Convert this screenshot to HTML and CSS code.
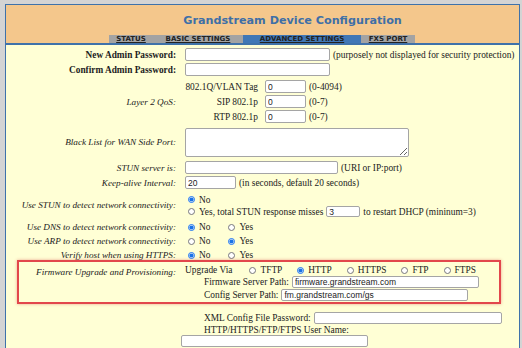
FILE: index.html
```html
<!DOCTYPE html>
<html lang="en">
<head>
  <meta charset="UTF-8" />
  <title>Grandstream Device Configuration</title>
  <link rel="stylesheet" href="styles.css">
</head>
<body>
  <div class="frame">
    <div class="header">
      <div class="title">Grandstream Device Configuration</div>
      <div class="tabs">
        <a class="tab tab-status">STATUS</a>
        <a class="tab tab-basic">BASIC SETTINGS</a>
        <a class="tab tab-adv active">ADVANCED SETTINGS</a>
        <a class="tab tab-fxs">FXS PORT</a>
      </div>
    </div>

    <form class="config">
      <div class="row r15">
        <label class="lbl b">New Admin Password:</label>
        <div class="ctl"><input type="password" class="field w145"><span class="note">(purposely not displayed for security protection)</span></div>
      </div>
      <div class="row r15">
        <label class="lbl b">Confirm Admin Password:</label>
        <div class="ctl"><input type="password" class="field w145"></div>
      </div>

      <div class="row qos">
        <label class="lbl i">Layer 2 QoS:</label>
        <div class="qos-grid">
          <span class="qlbl">802.1Q/VLAN Tag</span><input type="text" class="field w41" value="0"><span class="note">(0-4094)</span>
          <span class="qlbl">SIP 802.1p</span><input type="text" class="field w41" value="0"><span class="note">(0-7)</span>
          <span class="qlbl">RTP 802.1p</span><input type="text" class="field w41" value="0"><span class="note">(0-7)</span>
        </div>
      </div>

      <div class="row r36">
        <label class="lbl i">Black List for WAN Side Port:</label>
        <div class="ctl"><textarea class="field area"></textarea></div>
      </div>

      <div class="row r15">
        <label class="lbl i">STUN server is:</label>
        <div class="ctl"><input type="text" class="field w153"><span class="note">(URI or IP:port)</span></div>
      </div>
      <div class="row r15">
        <label class="lbl i">Keep-alive Interval:</label>
        <div class="ctl"><input type="text" class="field w51" value="20"><span class="note">(in seconds, default 20 seconds)</span></div>
      </div>

      <div class="row r30">
        <label class="lbl i">Use STUN to detect network connectivity:</label>
        <div class="lines">
          <div class="line"><label class="opt"><input type="radio" name="stun" checked>No</label></div>
          <div class="line"><label class="opt"><input type="radio" name="stun">Yes, total STUN response misses</label><input type="text" class="field w34" value="3"><span class="note">to restart DHCP (mininum=3)</span></div>
        </div>
      </div>

      <div class="row r14">
        <label class="lbl i">Use DNS to detect network connectivity:</label>
        <div class="ctl"><label class="opt"><input type="radio" name="dns" checked>No</label><label class="opt"><input type="radio" name="dns">Yes</label></div>
      </div>
      <div class="row r14">
        <label class="lbl i">Use ARP to detect network connectivity:</label>
        <div class="ctl"><label class="opt"><input type="radio" name="arp">No</label><label class="opt"><input type="radio" name="arp" checked>Yes</label></div>
      </div>
      <div class="row r14">
        <label class="lbl i">Verify host when using HTTPS:</label>
        <div class="ctl"><label class="opt"><input type="radio" name="vh" checked>No</label><label class="opt"><input type="radio" name="vh">Yes</label></div>
      </div>

      <div class="row fw">
        <label class="lbl i top">Firmware Upgrade and Provisioning:</label>
        <div class="lines">
          <div class="line h12 via">
            <span>Upgrade Via</span>
            <label class="opt"><input type="radio" name="via">TFTP</label>
            <label class="opt"><input type="radio" name="via" checked>HTTP</label>
            <label class="opt"><input type="radio" name="via">HTTPS</label>
            <label class="opt"><input type="radio" name="via">FTP</label>
            <label class="opt"><input type="radio" name="via">FTPS</label>
          </div>
          <div class="line h12 sub"><span>Firmware Server Path:</span><input type="text" class="field w187" value="firmware.grandstream.com"></div>
          <div class="line h13 sub"><span>Config Server Path:</span><input type="text" class="field w187" value="fm.grandstream.com/gs"></div>
        </div>
      </div>

      <div class="extra">
        <div class="line h12 sub"><span>XML Config File Password:</span><input type="password" class="field w188"></div>
        <div class="line h11 sub"><span>HTTP/HTTPS/FTP/FTPS User Name:</span></div>
        <input type="text" class="field w187 last">
      </div>
    </form>
  </div>
</body>
</html>
```

FILE: styles.css
```css
:root {
  --page: #d4d4d4;
  --frame: #3f72aa;
  --header: #f4c78c;
  --body: #ffffd5;
  --tab: #a3a3a3;
  --tab-on: #4077b6;
  --title: #3e6fa7;
  --text: #222;
  --mark: #e2474c;
}

* {
  box-sizing: border-box;
}

body {
  margin: 0;
  background: var(--page);
  font-family: "Liberation Serif", serif;
  font-size: 9.4px;
  color: var(--text);
}

.frame {
  margin: 4px 2px 0 5px;
  height: 344px;
  border: 1px solid var(--frame);
  border-bottom: none;
  background: var(--body);
  overflow: hidden;
}

.header {
  height: 40px;
  display: flex;
  flex-direction: column;
  background: var(--header);
  border-bottom: 2px solid var(--frame);
}

.title {
  padding: 10px 0 0 60px;
  text-align: center;
  font: bold 11.2px "DejaVu Sans", sans-serif;
  line-height: 11px;
  color: var(--title);
}

.tabs {
  margin-top: auto;
  display: flex;
  padding-left: 103px;
}

.tab {
  height: 8px;
  line-height: 8px;
  text-align: center;
  font: bold 7px "DejaVu Sans", sans-serif;
  color: var(--text);
  text-decoration: underline;
  background: var(--tab);
}

.tab.active {
  background: var(--tab-on);
}

.tab-status { width: 44px; }
.tab-basic { width: 90px; }
.tab-adv { width: 118px; }
.tab-fxs { width: 54px; }

/* form rows */
.config {
  padding-top: 2px;
}

.row {
  position: relative;
  display: grid;
  grid-template-columns: 156px 1fr;
  column-gap: 9px;
  align-items: center;
  padding-left: 14px;
}

.r14 { height: 14px; }
.r15 { height: 15px; }
.r30 { height: 30px; }
.r36 { height: 36px; }

.lbl {
  text-align: right;
  white-space: nowrap;
}

.lbl.b {
  font-weight: bold;
  font-size: 9.3px;
}

.lbl.i {
  font-style: italic;
  font-size: 9.2px;
}

.lbl.top {
  align-self: start;
  padding-top: 2px;
  line-height: 12px;
}

.ctl, .line {
  display: flex;
  align-items: center;
  white-space: nowrap;
}

.note {
  margin-left: 3px;
}

.field {
  height: 13px;
  padding: 0 2px;
  border: 1px solid #a5a5a5;
  border-radius: 2px;
  background: #fff;
  font: 8.5px "Liberation Sans", sans-serif;
  color: #222;
}

.w34 { width: 34px; margin-left: 3px; }
.w41 { width: 41px; }
.w51 { width: 51px; }
.w145 { width: 145px; }
.w153 { width: 153px; }
.w187 { width: 187px; }
.w188 { width: 188px; }

.area {
  width: 224px;
  height: 29px;
  resize: both;
}

.qos {
  margin-top: 2px;
}

.qos-grid {
  display: grid;
  grid-template-columns: 73px 41px auto;
  grid-auto-rows: 15px;
  column-gap: 7px;
  align-items: center;
}

.qos-grid .qlbl {
  text-align: right;
  white-space: nowrap;
}

.qos-grid .note {
  margin-left: -4px;
}

.lines {
  display: flex;
  flex-direction: column;
}

.r30 .lines {
  padding-top: 1px;
}

.r30 .line {
  height: 12px;
}

.h11 { height: 11px; }
.h12 { height: 12px; }
.h13 { height: 13px; }

.opt {
  display: flex;
  align-items: center;
}

.opt + .opt {
  margin-left: 15px;
}

input[type="radio"] {
  width: 7px;
  height: 7px;
  margin: 0 4px 0 3px;
  accent-color: #1a72e6;
}

.r30 .line .field {
  height: 11px;
}

/* firmware block with review marker */
.fw {
  padding-top: 2px;
  align-items: start;
}

.fw::after {
  content: "";
  position: absolute;
  left: 11px;
  right: 18px;
  top: -2px;
  bottom: -3px;
  border: 2px solid var(--mark);
  box-shadow: 0 0 3px rgba(210, 60, 60, 0.45);
}

.via .opt:first-of-type {
  margin-left: 14px;
}

.via .opt + .opt {
  margin-left: 12px;
}

.sub {
  padding-left: 19px;
}

.sub .field {
  margin-left: 3px;
  height: 12px;
}

.extra {
  margin-top: 11px;
  padding-left: 175px;
}

.extra .sub {
  padding-left: 23px;
}

.last {
  display: block;
  height: 12px;
}
```
